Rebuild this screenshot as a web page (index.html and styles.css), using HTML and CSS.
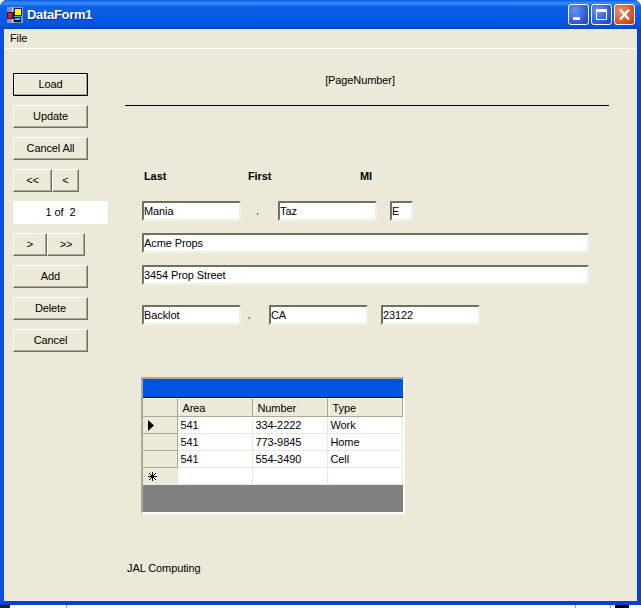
FILE: index.html
```html
<html>
<head>
<title>DataForm1</title>
<link rel="stylesheet" href="styles.css">
</head>
<body>

<div class="window">
  <div class="titlebar">
    <svg class="appicon" width="16" height="16" viewBox="0 0 16 16">
      <rect x="0" y="0" width="16" height="16" fill="#8494b4"/>
      <path d="M5.5 0v16M0 5.5h8M0 10.5h8" stroke="#c8d2e4" stroke-width="1" fill="none"/>
      <rect x="0" y="5" width="7" height="7" fill="#223"/>
      <rect x="1" y="6" width="4" height="5" fill="#f01040"/>
      <rect x="7" y="1" width="8" height="8" fill="#222"/>
      <rect x="8" y="2" width="6" height="6" fill="#ffff00"/>
      <rect x="7" y="10" width="7" height="5" fill="#000080"/>
      <rect x="8" y="11" width="5" height="2" fill="#00d8e8"/>
    </svg>
    <span class="title">DataForm1</span>
    <div class="winbtns">
      <div class="winbtn">
        <svg width="19" height="19" viewBox="0 0 19 19"><rect x="4" y="12" width="7" height="3" fill="#fff"/></svg>
      </div>
      <div class="winbtn">
        <svg width="19" height="19" viewBox="0 0 19 19"><path d="M4.5 5.5h10v9h-10z" fill="none" stroke="#fff"/><rect x="4" y="4" width="11" height="3" fill="#fff"/></svg>
      </div>
      <div class="winbtn close">
        <svg width="19" height="19" viewBox="0 0 19 19"><path d="M5 4.5l9 10M14 4.5l-9 10" fill="none" stroke="#fff" stroke-width="2.4"/></svg>
      </div>
    </div>
  </div>

  <div class="menubar"><span>File</span></div>

  <div class="client">
    <div class="side">
      <div class="btn default">Load</div>
      <div class="btn">Update</div>
      <div class="btn">Cancel All</div>
      <div class="navrow">
        <div class="btn w39">&lt;&lt;</div>
        <div class="btn w27">&lt;</div>
      </div>
      <div class="counter">1 of&nbsp; 2</div>
      <div class="navrow">
        <div class="btn w34">&gt;</div>
        <div class="btn w38">&gt;&gt;</div>
      </div>
      <div class="btn">Add</div>
      <div class="btn">Delete</div>
      <div class="btn">Cancel</div>
    </div>

    <div class="main">
      <div class="pagenum">[PageNumber]</div>
      <hr class="rule">

      <div class="labels">
        <b class="lb-last">Last</b>
        <b class="lb-first">First</b>
        <b>MI</b>
      </div>

      <div class="row name-row">
        <div class="field w99">Mania</div>
        <span class="sep w37">,</span>
        <div class="field w99">Taz</div>
        <div class="field w23 ml13">E</div>
      </div>
      <div class="row"><div class="field w447">Acme Props</div></div>
      <div class="row"><div class="field w447">3454 Prop Street</div></div>
      <div class="row city-row">
        <div class="field w99">Backlot</div>
        <span class="sep w28">,</span>
        <div class="field w99">CA</div>
        <div class="field w99 ml13">23122</div>
      </div>

      <div class="grid">
        <div class="grid-caption"></div>
        <table>
          <tr class="head">
            <th class="rowhead"></th>
            <th class="c1"><span>Area</span></th>
            <th class="c2"><span>Number</span></th>
            <th class="c3"><span>Type</span></th>
          </tr>
          <tr>
            <td class="rowhead raised"><svg width="7" height="11" viewBox="0 0 7 11"><path d="M0 0l6 5.5-6 5.5z" fill="#000"/></svg></td>
            <td>541</td><td>334-2222</td><td>Work</td>
          </tr>
          <tr><td class="rowhead raised"></td><td>541</td><td>773-9845</td><td>Home</td></tr>
          <tr><td class="rowhead raised"></td><td>541</td><td>554-3490</td><td>Cell</td></tr>
          <tr>
            <td class="rowhead"><svg width="9" height="9" viewBox="0 0 9 9"><path d="M4.5 0v9M0 4.5h9M1 1l7 7M8 1l-7 7" stroke="#000" fill="none"/></svg></td>
            <td></td><td></td><td></td>
          </tr>
        </table>
        <div class="grid-back"></div>
      </div>

      <div class="footer">JAL Computing</div>
    </div>
  </div>
</div>

<!-- bits of the desktop showing under the window -->
<div class="desk">
  <i class="mark m1"></i>
  <i class="mark m2"></i>
  <i class="mark m3"></i>
  <i class="mark m4"></i>
  <i class="mark m5"></i>
</div>

</body>
</html>
```

FILE: styles.css
```css
html, body {
  margin: 0;
  padding: 0;
  background-color: #fdfdf3;
  overflow: hidden;
}
div.window {
  box-sizing: border-box;
  width: 641px;
  height: 605px;
  border-left: 4px solid #0a4ee0;
  border-right: 4px solid #0840cc;
  border-bottom: 4px solid #0840d0;
  border-radius: 7px 7px 0 0;
  background-color: #ece9d8;
  font-family: "Liberation Sans", sans-serif;
  font-size: 11px;
  letter-spacing: -0.1px;
  color: #000;
}
div.titlebar {
  display: flex;
  align-items: center;
  height: 29px;
  margin: 0 -4px;
  padding: 0 6px 0 7px;
  border-radius: 7px 7px 0 0;
  background: linear-gradient(#0a5ce8 0, #3a8cf8 3px, #0a62e8 7px, #0458e4 20px, #0450d8 27px, #0240b8 29px);
}
svg.appicon {
  margin-right: 4px;
}
span.title {
  color: #fff;
  font-size: 13px;
  font-weight: bold;
  letter-spacing: -0.3px;
  text-shadow: 1px 1px 0 #0a2a90;
}
div.winbtns {
  display: flex;
  gap: 2px;
  margin-left: auto;
}
div.winbtn {
  box-sizing: border-box;
  width: 21px;
  height: 21px;
  border: 1px solid #fff;
  border-radius: 3px;
  background: radial-gradient(circle at 30% 30%, #6c8ff0, #2a56d8 70%, #1c40b8);
}
div.winbtn svg {
  display: block;
}
div.winbtn.close {
  background: radial-gradient(circle at 30% 30%, #f09070, #e0522c 60%, #c03a18);
}
div.menubar {
  height: 19px;
  padding-left: 6px;
  border-bottom: 1px solid #fff;
  line-height: 18px;
}
div.client {
  display: flex;
}
div.side {
  display: flex;
  flex-direction: column;
  gap: 9px;
  width: 121px;
  padding: 24px 0 0 9px;
  box-sizing: border-box;
}
div.btn {
  box-sizing: border-box;
  width: 75px;
  height: 23px;
  border: 1px solid;
  border-color: #fff #716f64 #716f64 #fff;
  box-shadow: inset -1px -1px 0 #aca899;
  line-height: 21px;
  text-align: center;
}
div.btn.default {
  border-color: #000;
  box-shadow: inset -1px -1px 0 #aca899, inset 1px 1px 0 #fff;
}
div.btn.w39 { width: 39px; }
div.btn.w27 { width: 27px; }
div.btn.w34 { width: 34px; }
div.btn.w38 { width: 38px; }
div.navrow {
  display: flex;
}
div.counter {
  width: 95px;
  height: 23px;
  background-color: #fff;
  line-height: 23px;
  text-align: center;
}
div.main {
  width: 484px;
}
div.pagenum {
  margin-top: 24px;
  padding-right: 14px;
  line-height: 14px;
  text-align: center;
}
hr.rule {
  height: 1px;
  margin: 18px 0 0;
  border: 0;
  background-color: #000;
}
div.labels {
  display: flex;
  margin: 63px 0 0 19px;
  line-height: 14px;
}
b.lb-last { width: 104px; }
b.lb-first { width: 112px; }
div.row {
  display: flex;
  align-items: center;
  margin: 12px 0 0 17px;
}
div.name-row {
  margin-top: 18px;
}
div.city-row {
  margin-top: 20px;
}
div.field {
  box-sizing: border-box;
  height: 20px;
  border: 2px solid;
  border-color: #716f64 #f1efe2 #f1efe2 #716f64;
  background-color: #fff;
  line-height: 17px;
  white-space: nowrap;
}
div.w99 { width: 99px; }
div.w23 { width: 23px; }
div.w447 { width: 447px; }
div.ml13 { margin-left: 13px; }
span.sep {
  box-sizing: border-box;
  text-align: center;
  font-size: 9px;
}
span.w37 { width: 37px; padding-right: 4px; }
span.w28 { width: 28px; padding-right: 12px; }
div.grid {
  box-sizing: border-box;
  width: 264px;
  margin: 52px 0 0 16px;
  border: 2px solid;
  border-color: #aca899 #fff #fff #aca899;
}
div.grid-caption {
  height: 18px;
  border-bottom: 1px solid #000;
  background-color: #0054e3;
}
div.grid table {
  width: 100%;
  border-collapse: collapse;
  table-layout: fixed;
  background-color: #fff;
  font-size: inherit;
  letter-spacing: inherit;
}
div.grid th, div.grid td {
  box-sizing: border-box;
  height: 17px;
  padding: 0 0 0 3px;
  border-right: 1px solid #ece9d8;
  border-bottom: 1px solid #ece9d8;
  font-weight: normal;
  text-align: left;
  overflow: hidden;
  white-space: nowrap;
}
div.grid tr.head th {
  height: 18px;
  border-top: 1px solid #fff;
  border-bottom: 1px solid #aca899;
  border-right: 1px solid #aca899;
  background-color: #ece9d8;
  padding-left: 1px;
}
div.grid tr.head th span {
  padding-left: 3px;
  border-left: 1px solid #fff;
}
div.grid .rowhead {
  width: 34px;
  padding: 0 0 0 5px;
  background-color: #ece9d8;
}
div.grid .rowhead svg {
  display: block;
}
div.grid td.raised {
  border-top: 1px solid #fff;
  border-right: 1px solid #aca899;
  border-bottom: 1px solid #aca899;
}
th.c1, th.c2 { width: 75px; }
div.grid-back {
  height: 27px;
  background-color: #808080;
}
div.footer {
  margin: 47px 0 0 2px;
  line-height: 14px;
}
div.desk {
  position: relative;
  height: 3px;
}
i.mark {
  position: absolute;
  top: 0;
  height: 3px;
  background-color: #9a9a90;
}
i.m1 { left: 0; width: 10px; background-color: #222; }
i.m2 { left: 66px; width: 1px; }
i.m3 { left: 575px; width: 1px; }
i.m4 { left: 610px; width: 1px; }
i.m5 { left: 615px; width: 14px; background-color: #000; }
```
